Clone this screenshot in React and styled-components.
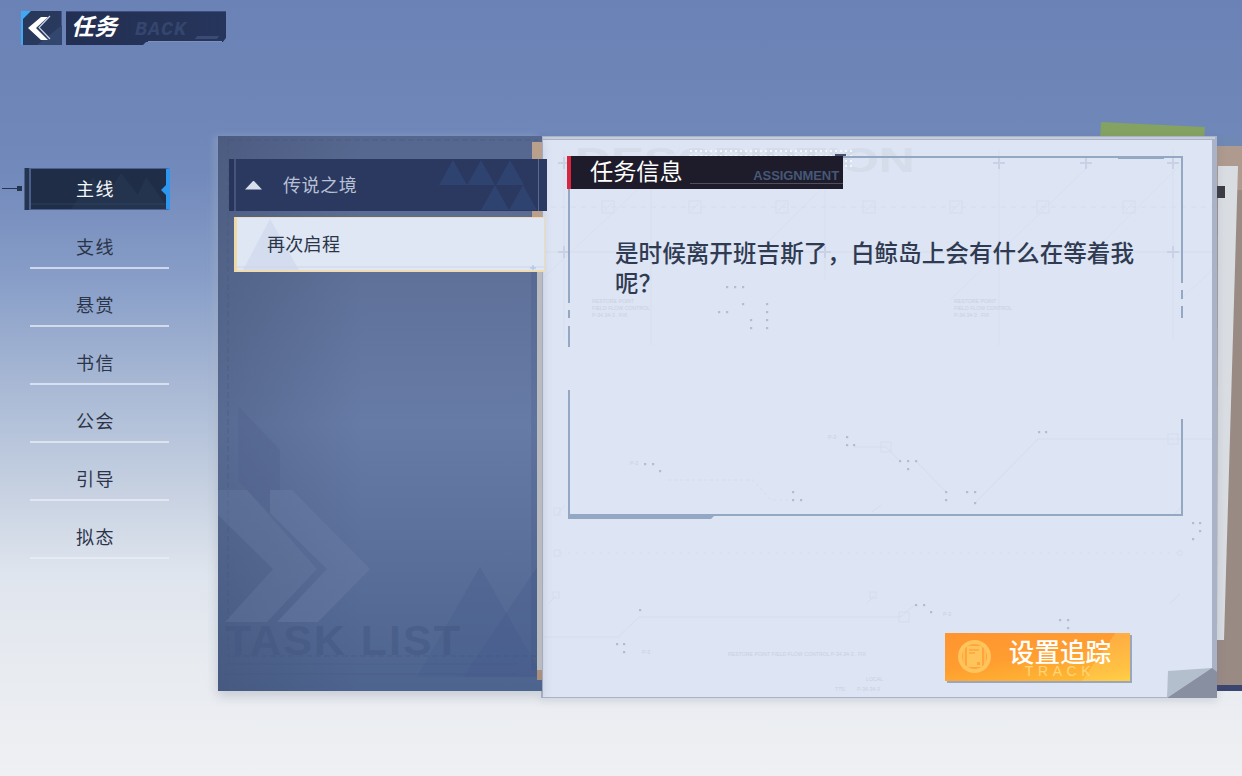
import React from "react";
import styled, { createGlobalStyle } from "styled-components";

const CJK = `"Noto Sans CJK SC", "Noto Sans", sans-serif`;

const Global = createGlobalStyle`
  html, body { margin: 0; padding: 0; background: #eef0f3; }
  body { font-family: ${CJK}; }
  * { box-sizing: border-box; }
`;

const Screen = styled.div`
  width: 1242px; height: 776px; overflow: hidden; position: relative;
  display: flex; flex-direction: column;
  background: linear-gradient(180deg, #6a82b5 0%, #6d85b7 12%, #7189bb 22%, #889ec8 36%, #a9b9d5 50%, #c8d2e2 64%, #dfe5ee 74%, #e8ebf0 86%, #eef0f3 100%);
`;

const Header = styled.header`
  display: flex; gap: 4px; height: 136px; padding: 11px 0 0 21px; align-items: flex-start;
`;
const BackButton = styled.button`
  width: 41px; height: 34px; padding: 0; border: 0; position: relative; overflow: hidden;
  background: linear-gradient(120deg, #26375a 0%, #2a3b60 100%);
  border-left: 2px solid #3fa9f5; display: block;
  box-shadow: inset -1px 0 0 #46598a;
  & > svg { display: block; }
  &::before { content: ""; position: absolute; left: 0; top: 0; width: 8px; height: 8px; background: #3fa9f5; clip-path: polygon(0 0, 100% 0, 0 100%); }
`;
const TitleBar = styled.div`
  width: 160px; height: 34px; position: relative; display: flex; align-items: center; padding: 0 0 6px 5px; gap: 18px;
  background: linear-gradient(90deg, #232f52, #26355c);
  clip-path: polygon(0 0, 100% 0, 100% 27px, 98% 31px, 80px 31px, 77px 34px, 0 34px);
  border-top: 1px solid #3c4f7c;
  &::after { content: ""; position: absolute; left: 82px; right: 4px; bottom: 3px; height: 1px; background: #7f90b8; }
  &::before { content: ""; position: absolute; left: 130px; top: 24px; width: 22px; height: 3px; background: #3a4c76; transform: skewX(-40deg); }
`;
const TitleText = styled.span`
  font-size: 23px; font-weight: 700; font-style: italic; color: #fff; line-height: 1;
`;
const BackText = styled.span`
  font: italic 700 20px "Liberation Mono", monospace; letter-spacing: 1px; color: #35466e; margin-top: 8px;
`;

const Main = styled.main`
  display: flex; flex: 1; align-items: flex-start;
`;

const Sidebar = styled.nav`
  width: 218px; padding: 32px 0 0 30px; flex: none; display: flex; flex-direction: column; position: relative;
`;
const NavItem = styled.div`
  width: 139px; height: 58px; display: flex; align-items: center; justify-content: center;
  font-size: 18px; font-weight: 400; letter-spacing: 1.4px; color: #2b3448; padding: 14px 8px 0 0;
  border-bottom: 2px solid rgba(232, 236, 245, 0.75);
`;
const ActiveWrap = styled.div`
  height: 43px; position: relative;
`;
const ActiveItem = styled.div`
  width: 140px; height: 42px; position: relative;
  display: flex; align-items: center; justify-content: center;
  font-size: 18px; font-weight: 400; letter-spacing: 1.4px; color: #f4f7fb; padding: 0 6px 2px 0;
  background: #1f2d46; border: 1px solid #4a5f8c; border-right: 4px solid #2f96f0;
  & > span { position: relative; }
  &::before { content: ""; position: absolute; left: -7px; top: -1px; bottom: -1px; width: 4px; background: #25344f; border: 1px solid #4a5f8c; border-width: 0 1px; }
  &::after { content: ""; position: absolute; right: 0; top: 16px; width: 5px; height: 10px; background: #2f96f0; clip-path: polygon(0 50%, 100% 0, 100% 100%); }
`;
const Tick = styled.i`
  position: absolute; left: -28px; top: 20px; width: 20px; height: 1px; background: #26354f;
  &::after { content: ""; position: absolute; right: 0; top: -2px; width: 5px; height: 5px; background: #26354f; }
`;
const ActiveArt = styled.svg`
  position: absolute; left: 0; top: 0; width: 135px; height: 40px;
`;

const Stage = styled.section`
  display: flex; position: relative; width: 1024px; height: 562px; align-items: flex-start;
`;
const BackSheets = styled.svg`
  position: absolute; left: 0; top: -16px; width: 1024px; height: 572px; z-index: 0;
`;
const TaskPanel = styled.div`
  width: 324px; height: 555px; flex: none; position: relative; z-index: 2;
  padding: 23px 0 0 11px; display: flex; flex-direction: column;
  background:
    linear-gradient(90deg, rgba(50, 62, 92, 0.28) 0%, rgba(50, 62, 92, 0) 45%),
    linear-gradient(180deg, #56678f 0%, #5f7199 25%, #667ba6 52%, #5a6f9a 76%, #4d648f 100%);
  box-shadow: 0 6px 10px rgba(90, 100, 120, 0.2), -4px 0 8px rgba(210, 218, 232, 0.25);
`;
const PanelArt = styled.svg`
  position: absolute; inset: 0; width: 324px; height: 555px;
`;
const PanelWatermark = styled.span`
  position: absolute; left: 7px; top: 484px;
  font: 700 43px/40px "Liberation Sans", sans-serif; letter-spacing: 2px;
  color: rgba(66, 86, 128, 0.5);
`;
const GroupHeader = styled.div`
  width: 318px; height: 52px; position: relative; flex: none; overflow: hidden;
  display: flex; align-items: center; gap: 21px; padding-left: 11px;
  background: #2b3860; border-left: 5px solid #28345a;
  font-size: 18px; letter-spacing: 0.6px; color: #b7c1d5;
  &::before { content: ""; position: absolute; left: 0; top: 0; bottom: 0; width: 2px; background: #44547e; }
`;
const Arrow = styled.i`
  width: 17px; height: 9px; background: #d6deeb; clip-path: polygon(50% 0, 100% 100%, 0 100%); flex: none;
`;
const GroupLabel = styled.span`
  position: relative; margin-top: -2px;
`;
const GroupTriangles = styled.svg`
  position: absolute; right: 0; top: 0; width: 120px; height: 52px;
`;
const TaskItem = styled.div`
  width: 311px; height: 55px; margin: 6px 0 0 5px; position: relative; flex: none; overflow: hidden;
  display: flex; align-items: center; padding: 0 0 2px 30px;
  background: #dfe6f4; border: 1px solid #f0dcb0; border-left: 3px solid #f0d9a6; border-bottom-width: 2px;
  font-size: 18px; font-weight: 400; letter-spacing: 0.3px; color: #2b3548;
  & > span { position: relative; }
`;
const TaskArt = styled.svg`
  position: absolute; left: 0; top: 0; width: 308px; height: 52px;
`;

const Paper = styled.article`
  width: 676px; height: 562px; margin-left: -1px; flex: none; position: relative; z-index: 1;
  padding: 20px 87px 17px 26px; display: flex; flex-direction: column;
  background: #dde4f3;
  box-shadow: 0 3px 8px rgba(90, 100, 120, 0.18);
`;
const PaperArt = styled.svg`
  position: absolute; left: 0; top: 0; width: 676px; height: 562px;
`;
const PaperWatermark = styled.span`
  position: absolute; left: 34px; top: 5px; transform: scaleX(1.42); transform-origin: left center;
  font: 700 35px/38px "Liberation Sans", sans-serif; color: #d5dcea; white-space: nowrap;
`;
const Heading = styled.div`
  width: 276px; height: 33px; flex: none; position: relative;
  display: flex; align-items: center; padding: 0 0 3px 19px;
  background: #1e1c2a; border-left: 4px solid #d8263f;
  font-size: 23.2px; font-weight: 400; color: #fff; line-height: 1;
`;
const HeadingSub = styled.span`
  position: absolute; right: 4px; top: 12px;
  font: 700 13px/16px "Liberation Sans", sans-serif; color: #465878; letter-spacing: -0.1px;
`;
const HeadingRule = styled.i`
  position: absolute; right: 0; bottom: 5px; width: 153px; height: 1px; background: #4f4f5e;
`;
const Body = styled.p`
  position: relative; width: 540px; margin: 48px 0 0 48px;
  font-size: 23.6px; font-weight: 500; line-height: 30px; color: #2f3b52;
`;
const TrackButton = styled.button`
  position: relative; width: 185px; height: 48px; margin-top: auto; align-self: flex-end;
  padding: 0; border: 0; display: flex; align-items: flex-start; overflow: visible;
  background:
    linear-gradient(125deg, rgba(255, 255, 255, 0) 78%, rgba(255, 230, 120, 0.25) 78%),
    linear-gradient(170deg, #ff9430 0%, #ff9d30 45%, #ffb733 85%, #ffc933 100%);
  box-shadow: 2px 2px 0 #9ba6bd;
  font-family: ${CJK};
`;
const TrackIcon = styled.svg`
  width: 33px; height: 33px; margin: 7px 0 0 13px; flex: none;
`;
const TrackLabels = styled.span`
  display: flex; flex-direction: column; align-items: center; margin-left: 17px; width: 104px;
`;
const TrackMain = styled.span`
  font-size: 25.6px; font-weight: 500; line-height: 24px; color: #fff; margin-top: 6px; white-space: nowrap;
`;
const TrackSub = styled.span`
  font: 400 14px/13px "Liberation Sans", sans-serif; letter-spacing: 4.6px; color: #ffd67a; margin-top: 2px;
`;

const navItems = ["支线", "悬赏", "书信", "公会", "引导", "拟态"];

const crosses = [[564,252],[825,252],[1173,252],[999,163],[1086,163],[1173,163],[564,163]];
const squares = [608,695,782,869,956,1043,1129];
const dots = [[847,437],[847,445],[854,445],[900,461],[908,461],[916,461],[908,469],[946,492],[946,500],[967,492],[975,492],[975,503],[1039,432],[1046,432],[645,464],[653,464],[660,471],[793,492],[793,500],[801,500],
  [727,287],[735,287],[743,287],[743,304],[767,304],[719,312],[727,312],[767,312],[751,320],[767,320],[751,328],[767,328],[1193,523],[1200,523],[1200,531],[1193,539],[916,605],[924,605],[931,612],[617,644],[624,644],[624,652],[640,610],[1060,620],[1068,620],[1068,628]];

export default function App() {
  return (
    <Screen>
      <Global />
      <Header>
        <BackButton aria-label="back">
          <svg width="39" height="34" viewBox="0 0 39 34">
            <path d="M39 14 V34 H14Z" fill="#33466e" />
            <path d="M27 5 L16 16.5 L27 28" fill="none" stroke="#c9d3e4" strokeWidth="1.2" />
            <path d="M18 6 L5 17 L18 29 H25 L13 17 L25 6Z" fill="#fff" />
          </svg>
        </BackButton>
        <TitleBar>
          <TitleText>任务</TitleText>
          <BackText>BACK</BackText>
        </TitleBar>
      </Header>
      <Main>
        <Sidebar>
          <ActiveWrap>
            <Tick />
            <ActiveItem>
              <ActiveArt viewBox="0 0 135 40">
                <path d="M62 8 L84 40 H40Z M90 4 L118 40 H66Z M115 8 L135 36 V40 H100Z" fill="#263650" opacity="0.8" />
                <path d="M0 35 H135" stroke="#2b4060" strokeWidth="1" />
              </ActiveArt>
              <span>主线</span>
            </ActiveItem>
          </ActiveWrap>
          {navItems.map((n) => (
            <NavItem key={n}>{n}</NavItem>
          ))}
        </Sidebar>
        <Stage>
          <BackSheets viewBox="218 120 1024 572">
            <path d="M1101 122 L1205 127 L1204 140 L1100 140Z" fill="#84a262" />
            <rect x="1216" y="136" width="26" height="16" fill="#7088b4" />
            <rect x="1216" y="146" width="26" height="544" fill="#9a8a84" />
            <path d="M1216 146 H1242 V190 H1216Z" fill="#ae9a8e" />
            <path d="M1218 166 H1238 L1224 640 H1217Z" fill="#d9dde2" />
            <rect x="1217" y="186" width="8" height="12" fill="#3c3c44" />
            <rect x="1216" y="685" width="26" height="6" fill="#3a4670" />
          </BackSheets>
          <TaskPanel>
            <PanelArt viewBox="0 0 324 555">
              <path d="M10 4 H320 M10 4 V520 H320" fill="none" stroke="#44557c" strokeWidth="1.4" strokeDasharray="6 3" opacity="0.35" />
              <path d="M0 354 L29 354 L99 433 L49 486 L7 486 L55 433 L0 379Z" fill="#6a7da3" opacity="0.35" />
              <path d="M52 354 L74 354 L152 433 L100 486 L59 486 L109 433 L52 377Z" fill="#6a7da3" opacity="0.45" />
              <path d="M20 270 L62 314 V354 H52 V377 L20 345Z" fill="#4f628c" opacity="0.35" />
              <path d="M262 431 L199 541 H325Z" fill="#46598a" opacity="0.3" />
              <path d="M324 424 L245 541 H324Z" fill="#46598a" opacity="0.3" />
              <path d="M8 528 H300 M8 538 H300" stroke="#46587f" strokeWidth="1" opacity="0.35" />
              <rect x="313" y="20" width="6" height="514" fill="#3f4f78" opacity="0.18" />
              <rect x="319" y="6" width="5" height="528" fill="#b9bbbf" />
              <rect x="314" y="6" width="10" height="130" fill="#b8a08c" />
              <rect x="319" y="534" width="5" height="10" fill="#a98f7c" />
            </PanelArt>
            <PanelWatermark>TASK LIST</PanelWatermark>
            <GroupHeader>
              <GroupTriangles viewBox="0 0 120 52">
                <path d="M26 1 L40 26 H12Z M54 1 L68 26 H40Z M83 1 L97 26 H69Z M68 26 L82 51 H54Z M96 26 L110 51 H82Z" fill="#2f4370" />
                <rect x="111" y="0" width="1" height="52" fill="#556a96" />
              </GroupTriangles>
              <Arrow />
              <GroupLabel>传说之境</GroupLabel>
            </GroupHeader>
            <TaskItem>
              <TaskArt viewBox="0 0 308 52">
                <path d="M33 1 L62 52 H6Z" fill="#d3ddef" />
                <path d="M0 49 H308" stroke="#cfd6e6" strokeWidth="1" />
                <path d="M296 47 V53 M293 50 H299" stroke="#9dc4ea" strokeWidth="1" />
              </TaskArt>
              <span>再次启程</span>
            </TaskItem>
          </TaskPanel>
          <Paper>
            <PaperWatermark>DESCRIPTION</PaperWatermark>
            <PaperArt viewBox="541 136 676 562">
              <defs>
                <pattern id="dotband" width="5" height="5" patternUnits="userSpaceOnUse">
                  <rect width="2" height="2" fill="#f4f6fb" />
                </pattern>
              </defs>
              <rect x="687" y="150" width="166" height="20" fill="url(#dotband)" />
              <rect x="835" y="154" width="11" height="2" fill="#47526c" />
              <g stroke="#d5dded" strokeWidth="1" fill="none">
                <path d="M541 207 H1212" strokeDasharray="5 5" />
                <path d="M541 252 H1212" />
                <path d="M564 150 V340 M651 150 V345 M825 150 V280 M999 150 V345 M1173 150 V340" opacity="0.5" />
                <path d="M541 280 L680 150 M740 270 L860 150 M950 300 L1090 165 M1095 250 L1180 165 M1180 300 L1212 270" opacity="0.7" />
                {squares.map((x) => <rect key={x} x={x - 6} y={201} width="12" height="12" />)}
                {squares.map((x) => <path key={x} d={`M${x - 4} ${211} L${x + 4} ${203}`} />)}
                <path d="M668 480 H753 L771 500 H790" strokeDasharray="3 3" />
                <path d="M854 447 H886 L900 461 M916 461 L946 492 M975 503 L1038 439 H1212" />
                <rect x="881" y="442" width="10" height="10" />
                <rect x="1168" y="434" width="10" height="10" />
                <path d="M556 516 L565 505 M872 512 L881 505 M1173 516 L1183 505" />
                <rect x="554" y="508" width="6" height="7" />
                <path d="M541 637 H618 L639 617 H900 L916 604" />
                <rect x="899" y="612" width="10" height="10" />
                <path d="M549 603 L556 596 M867 603 L874 596 M1170 603 L1180 594" />
                <rect x="553" y="592" width="6" height="6" />
                <rect x="870" y="592" width="6" height="6" />
                <rect x="554" y="550" width="6" height="6" />
                <circle cx="1180" cy="553" r="2.5" />
                <path d="M560 553 H1180" strokeDasharray="2 6" />
              </g>
              <g stroke="#c8d2e4" strokeWidth="2">
                {crosses.map(([x, y]) => <path key={`${x}${y}`} d={`M${x - 6} ${y} H${x + 6} M${x} ${y - 6} V${y + 6}`} />)}
              </g>
              <g fill="#b3bdd0">
                {dots.map(([x, y]) => <rect key={`${x}-${y}`} x={x - 1} y={y - 1} width="2.2" height="2.2" />)}
              </g>
              <g fill="#c8d1e1" fontFamily="Liberation Sans, sans-serif" fontSize="5.2">
                <text x="592" y="303">RESTORE POINT</text>
                <text x="592" y="310">FIELD FLOW CONTROL</text>
                <text x="592" y="317">P-34.34-3 . FIX</text>
                <text x="954" y="303">RESTORE POINT</text>
                <text x="954" y="310">FIELD FLOW CONTROL</text>
                <text x="954" y="317">P-34.34-3 . FIX</text>
                <text x="728" y="656">RESTORE POINT FIELD FLOW CONTROL P-34.34-3 . FIX</text>
                <text x="866" y="681">LOCAL</text>
                <text x="835" y="691">TTS</text>
                <text x="857" y="691">P-34.34-3</text>
                <text x="642" y="654">P-3</text>
                <text x="943" y="616">P-3</text>
                <text x="630" y="465">P-3</text>
                <text x="828" y="439">P-3</text>
              </g>
              <path d="M541 136 H1217 V698 H1167 L1212 668 V140 H543 V697 H1167 V698 H541Z" fill="#a9b2c6" />
              <rect x="543" y="137" width="672" height="2" fill="#c5cdda" />
              <g fill="#94a8c4">
                <rect x="568" y="156" width="615" height="2" />
                <rect x="1118" y="156" width="46" height="3" />
                <rect x="568" y="156" width="2" height="147" />
                <rect x="568" y="310" width="2" height="8" />
                <rect x="568" y="326" width="2" height="21" />
                <rect x="568" y="390" width="2" height="126" />
                <rect x="1181" y="156" width="2" height="127" />
                <rect x="1181" y="290" width="2" height="9" />
                <rect x="1181" y="306" width="2" height="12" />
                <rect x="1181" y="419" width="2" height="97" />
                <rect x="568" y="514" width="615" height="2" />
                <path d="M568 514 H716 L711 519 H568Z" />
              </g>
              <path d="M1168 671 L1212 668 L1167 698Z" fill="#b4bfce" />
              <path d="M1212 668 L1217 672 V698 H1167Z" fill="#888fa1" />
            </PaperArt>
            <Heading>
              任务信息
              <HeadingRule />
              <HeadingSub>ASSIGNMENT</HeadingSub>
            </Heading>
            <Body>是时候离开班吉斯了，白鲸岛上会有什么在等着我呢？</Body>
            <TrackButton>
              <TrackIcon viewBox="0 0 33 33">
                <circle cx="16.5" cy="16.5" r="16.5" fill="#ffc45c" />
                <circle cx="16.5" cy="16.5" r="12.5" fill="#ffa53a" />
                <path d="M6 9 V24 M27 9 V24" stroke="#ffc45c" strokeWidth="1.5" />
                <rect x="9" y="6" width="15" height="21" rx="1" fill="#ffc45c" />
                <path d="M11 10 H21 M11 13 H17" stroke="#ffa53a" strokeWidth="1.4" />
                <rect x="19" y="22" width="3" height="3" fill="#ffa53a" />
              </TrackIcon>
              <TrackLabels>
                <TrackMain>设置追踪</TrackMain>
                <TrackSub>TRACK</TrackSub>
              </TrackLabels>
            </TrackButton>
          </Paper>
        </Stage>
      </Main>
    </Screen>
  );
}
